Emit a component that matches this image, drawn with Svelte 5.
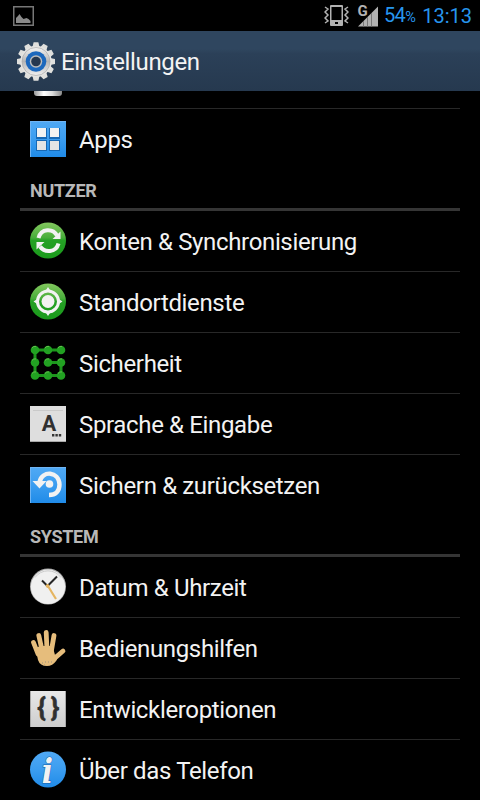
<script>
  const sections = [
    {
      title: 'Nutzer',
      items: [
        { icon: 'sync', label: 'Konten & Synchronisierung' },
        { icon: 'location', label: 'Standortdienste' },
        { icon: 'pattern', label: 'Sicherheit' },
        { icon: 'language', label: 'Sprache & Eingabe' },
        { icon: 'backup', label: 'Sichern & zurücksetzen' }
      ]
    },
    {
      title: 'System',
      items: [
        { icon: 'clock', label: 'Datum & Uhrzeit' },
        { icon: 'hand', label: 'Bedienungshilfen' },
        { icon: 'braces', label: 'Entwickleroptionen' },
        { icon: 'info', label: 'Über das Telefon' }
      ]
    }
  ];

  const dots = [[5, 5], [18, 5], [31, 5], [5, 17.5], [18, 17.5], [31, 17.5], [5, 30.5], [18, 30.5], [31, 30.5]];
  const teeth = Array.from({ length: 12 }, (_, i) => i * 30);
</script>

{#snippet row(item)}
  <a class="row" href="#{item.icon}">
    <svg class="icon" width="36" height="36" viewBox="0 0 36 36" aria-hidden="true">
      {#if item.icon === 'apps'}
        <rect width="36" height="36" fill="url(#blue)" />
        <path d="M.5 36V.5H36" fill="none" stroke="#6fb4f3" />
        <g fill="#1769b5">
          <rect x="6" y="7" width="11" height="11" />
          <rect x="19" y="7" width="11" height="11" />
          <rect x="6" y="19" width="11" height="11" />
          <rect x="19" y="19" width="11" height="11" />
        </g>
        <g fill="#f2f2f2">
          <rect x="7" y="7" width="9" height="9" />
          <rect x="20" y="7" width="9" height="9" />
          <rect x="7" y="20" width="9" height="9" fill="#e4e4e4" />
          <rect x="20" y="20" width="9" height="9" fill="#e4e4e4" />
        </g>
      {:else if item.icon === 'sync'}
        <circle cx="18" cy="17.500" r="18" fill="url(#green)" />
        <g fill="none" stroke="#f2f2f2" stroke-width="4">
          <path d="M8.500 15C11 5 23 5 27 12.500" />
          <path d="M28.500 20.500C26 30 14.500 30 10 23.500" />
        </g>
        <path d="M30.500 8.500v7.500h-8zM6.500 26.500V19h8z" fill="#f2f2f2" />
      {:else if item.icon === 'location'}
        <circle cx="18" cy="17.500" r="18" fill="url(#green)" />
        <circle cx="18" cy="17.500" r="10.500" fill="none" stroke="#f2f2f2" stroke-width="3" />
        <circle cx="18" cy="17.500" r="6.500" fill="#f2f2f2" />
        <path d="M15 7.500l3-4.500 3 4.500zM15 27.500l3 4.500 3-4.500zM8 14.500l-4.500 3 4.500 3zM28 14.500l4.500 3-4.500 3z" fill="#f2f2f2" />
      {:else if item.icon === 'pattern'}
        <path d="M31 5H5v25.500h26v-13H18" fill="none" stroke="#1d961d" stroke-width="3" />
        {#each dots as [cx, cy]}
          <circle {cx} {cy} r="4.300" fill="#22a122" />
          <path d="M{cx - 3} {cy - 2}a4 4 0 0 1 4-1.600" fill="none" stroke="#63bd4e" />
        {/each}
      {:else if item.icon === 'language'}
        <rect width="36" height="36" fill="#dedede" />
        <path d="M3 4.500h30" stroke="#cacaca" />
        <path d="M0 35.500h36" stroke="#a8a8a8" />
        <text x="19" y="25" font-size="21.500">A</text>
        <path d="M22 28h2.400v2.400H22zM25.400 28h2.400v2.400h-2.400zM28.800 28h2.400v2.400h-2.400z" fill="#353535" />
      {:else if item.icon === 'backup'}
        <rect width="36" height="36" fill="url(#blue)" />
        <path d="M.5 36V.5H36" fill="none" stroke="#6fb4f3" />
        <path d="M9.500 15C12 3 29 4 29.500 17.500c0 7-4 10.500-10.500 10.500" fill="none" stroke="#f2f2f2" stroke-width="4.400" />
        <path d="M2.500 14h14l-7 7.500z" fill="#f2f2f2" />
        <circle cx="19.500" cy="17" r="3.800" fill="#f2f2f2" />
      {:else if item.icon === 'clock'}
        <circle cx="18" cy="17.500" r="18" fill="#aaa" />
        <circle cx="18" cy="17.800" r="17.200" fill="#f0f0f0" />
        <path d="M5 8.500A16 16 0 0 1 31 8.500" fill="none" stroke="#ccc" />
        <path d="M27 7.500L17.500 17 12 11.500" fill="none" stroke="#262626" stroke-width="2" />
        <path d="M17 15.500l9 14.500" stroke="#e5b561" stroke-width="2.200" />
        <circle cx="17.500" cy="17" r="1.800" fill="#e5b561" />
      {:else if item.icon === 'hand'}
        <path
          d="M8 24L3.500 12.500M12 20L8.800 5.500M17 20L16.200 2.500M21.500 20L24 5.500M25 28l8-7"
          fill="none" stroke="#e6bd7c" stroke-width="4.800" stroke-linecap="round" />
        <path d="M5.500 18l5-2h12l2.500 9 4-2-2.500 7.500q-4 5.500-9.500 5.500-7 0-9-6z" fill="#e6bd7c" />
        <path d="M12 33h1M15 32h1M18 32h1M21 32h1M14 35h1" stroke="#9c927f" />
      {:else if item.icon === 'braces'}
        <rect width="36" height="36" fill="url(#grey)" />
        <path d="M.5 0v36M35.500 0v36" stroke="#a8a8a8" />
        <text class="brace" x="11.500" y="24.500">{'{'}</text>
        <text class="brace" x="25" y="24.500">{'}'}</text>
      {:else if item.icon === 'info'}
        <circle cx="18" cy="17.500" r="18" fill="url(#blue)" />
        <text class="info" x="17.500" y="30.500">i</text>
      {/if}
    </svg>
    <span>{item.label}</span>
  </a>
{/snippet}

<div class="screen">
  <svg class="defs" width="0" height="0" aria-hidden="true">
    <linearGradient id="green" x2="0" y2="1">
      <stop offset="0" stop-color="#83c85e" />
      <stop offset=".42" stop-color="#48ad3b" />
      <stop offset=".5" stop-color="#25a125" />
      <stop offset="1" stop-color="#1a9a1b" />
    </linearGradient>
    <linearGradient id="blue" x2="0" y2="1">
      <stop offset="0" stop-color="#50a9f4" />
      <stop offset=".5" stop-color="#3b9df0" />
      <stop offset="1" stop-color="#208be8" />
    </linearGradient>
    <linearGradient id="grey" x2="0" y2="1">
      <stop offset="0" stop-color="#e8e8e8" />
      <stop offset="1" stop-color="#cdcdcd" />
    </linearGradient>
    <linearGradient id="metal" x2="0" y2="1">
      <stop offset="0" stop-color="#f4f4f4" />
      <stop offset=".5" stop-color="#b5b5b5" />
      <stop offset="1" stop-color="#f0f0f0" />
    </linearGradient>
  </svg>

  <div class="status">
    <svg class="picture" width="21" height="20" viewBox="0 0 21 20" aria-hidden="true">
      <rect x=".75" y=".75" width="19.500" height="18.500" fill="none" stroke="#777" stroke-width="1.500" />
      <path d="M3 17v-5l2-2 1.500-2 2 3 2 2 3-1 2 1 2 2v2z" fill="#8b8b8b" />
    </svg>
    <svg class="vibrate" width="25" height="21" viewBox="0 0 25 21" aria-hidden="true">
      <path d="M6 1q0-1 1-1h11q1 0 1 1v19q0 1-1 1H7q-1 0-1-1z" fill="#b2b2b2" />
      <path d="M7.500 2h10v13h-10zM11 17h3v2h-3z" fill="#000" />
      <path d="M1 2l3 2-3 3 3 3-3 3 3 3-3 2M24 2l-3 2 3 3-3 3 3 3-3 3 3 2" fill="none" stroke="#b2b2b2" stroke-width="1.500" />
    </svg>
    <svg class="signal" width="20" height="22" viewBox="0 0 20 22" aria-hidden="true">
      <path d="M0 21.500L20 1.500v20z" fill="#b2b2b2" />
      <path d="M5.500 16v5.500M9.500 12v9.500M13.500 8v13.500" stroke="#777" />
      <text x="4.500" y="11" font-size="15">G</text>
    </svg>
    <span class="battery">54<small>%</small></span>
    <span class="time">13:13</span>
  </div>

  <header class="title-bar">
    <svg class="gear" width="38" height="39" viewBox="-19 -19.500 38 39" aria-hidden="true">
      {#each teeth as angle}
        <path d="M-3.600-14l1.200-5.200h4.800L3.600-14z" transform="rotate({angle})" fill="#e0e0dd" />
      {/each}
      <circle r="15.700" fill="#e4e4e2" />
      <circle r="14" fill="url(#metal)" stroke="#aaa" stroke-width=".7" />
      <circle r="10.300" fill="#1c68bd" />
      <circle r="6.200" fill="#bdbdbd" />
      <circle r="4.800" fill="#263850" />
    </svg>
    <h1>Einstellungen</h1>
  </header>

  <main>
    <div class="scrolled-row"><span class="disk"></span></div>
    {@render row({ icon: 'apps', label: 'Apps' })}
    {#each sections as section}
      <section>
        <h2>{section.title}</h2>
        {#each section.items as item}
          {@render row(item)}
        {/each}
      </section>
    {/each}
  </main>
</div>

<style>
  :global(body) {
    margin: 0;
    background: #000;
  }

  .screen {
    width: 480px;
    height: 800px;
    overflow: hidden;
    display: flex;
    flex-direction: column;
    background: #000;
    color: #f3f3f3;
    font-family: Roboto, sans-serif;
  }

  .defs {
    position: absolute;
  }

  .status {
    height: 31px;
    flex: none;
    display: flex;
    align-items: center;
    padding: 0 8px 0 13px;
    box-sizing: border-box;
    color: #2796ee;
    font-size: 20px;
    line-height: 29px;
  }

  .status span {
    padding-top: 2px;
  }

  .picture {
    margin-right: auto;
  }

  .vibrate {
    margin-right: 9px;
  }

  .signal {
    margin-right: 6px;
    overflow: visible;
  }

  .signal text {
    fill: #b2b2b2;
    stroke: #000;
    stroke-width: 1.5px;
    paint-order: stroke;
  }

  .battery {
    margin-right: 7px;
    letter-spacing: -0.6px;
  }

  .battery small {
    font-size: 14.5px;
  }

  .title-bar {
    height: 60px;
    flex: none;
    display: flex;
    align-items: center;
    gap: 6px;
    padding-left: 17px;
    background: linear-gradient(#2f465f 0 30%, #2b4058 38%, #26394f);
  }

  h1 {
    margin: 0;
    padding-top: 1px;
    font-size: 24px;
    font-weight: 400;
    letter-spacing: -0.35px;
  }

  main {
    padding: 0 20px;
  }

  .scrolled-row {
    height: 17px;
    padding-left: 14px;
    border-bottom: 1px solid #282828;
  }

  .disk {
    display: block;
    width: 28px;
    height: 5px;
    border-radius: 0 0 3px 3px;
    background: linear-gradient(90deg, #999, #fff 35%, #ddd 65%, #888);
  }

  .row {
    height: 60px;
    display: flex;
    align-items: center;
    gap: 13px;
    padding-left: 10px;
    border-bottom: 1px solid #282828;
    color: inherit;
    font-size: 24px;
    letter-spacing: -0.35px;
    text-decoration: none;
    white-space: nowrap;
  }

  .row:last-child,
  .row:has(+ section) {
    border-bottom-color: transparent;
  }

  .icon {
    flex: none;
    margin-bottom: 1px;
    overflow: visible;
  }

  .icon text,
  .signal text {
    font-weight: 700;
    letter-spacing: 0;
    text-anchor: middle;
  }

  .icon text {
    fill: #303030;
  }

  .icon .brace {
    font-size: 26px;
    stroke: #303030;
    stroke-width: 0.6px;
  }

  .icon .info {
    fill: #f2f2f2;
    stroke: #1662ad;
    stroke-width: 1px;
    paint-order: stroke;
    font: italic 700 33px 'DejaVu Serif Condensed', 'DejaVu Serif', serif;
  }

  .row span {
    padding-top: 1px;
  }

  h2 {
    height: 38px;
    margin: 0;
    padding-left: 10px;
    border-bottom: 3px solid #353535;
    color: #b8b8b8;
    font-size: 18px;
    font-weight: 700;
    letter-spacing: -0.3px;
    line-height: 42px;
    text-transform: uppercase;
  }
</style>
